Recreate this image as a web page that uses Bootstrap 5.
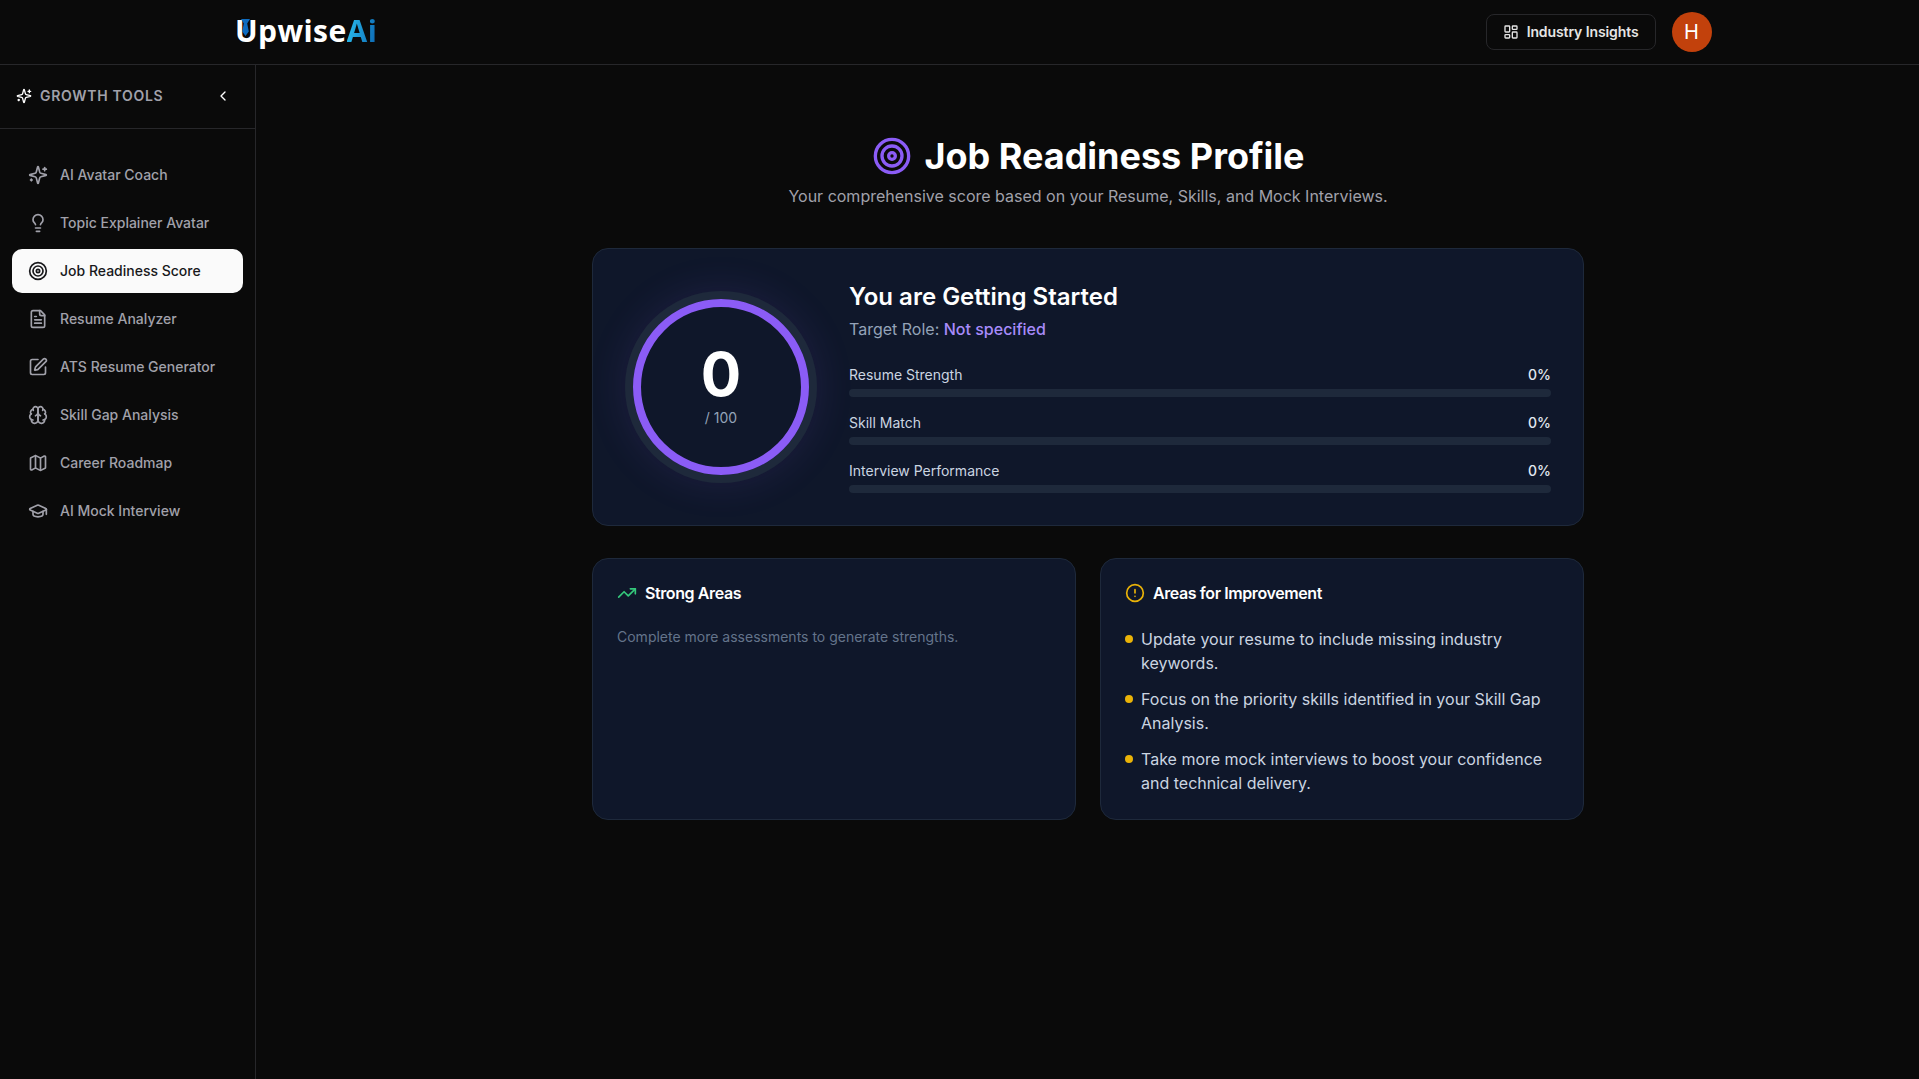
<!DOCTYPE html>
<html lang="en">

<head>
    <meta charset="UTF-8">
    <meta name="viewport" content="width=device-width, initial-scale=1.0">
    <title>Job Readiness Profile</title>
    <link href="https://cdn.jsdelivr.net/npm/bootstrap@5.3.0/dist/css/bootstrap.min.css" rel="stylesheet">
    <style>
        html, body { height: 100%; }
        body { background: #0a0a0a; color: #fafafa; font-family: Inter, "Liberation Sans", sans-serif; overflow: hidden; }
        .ico { width: 20px; height: 20px; flex-shrink: 0; fill: none; stroke: currentColor; stroke-width: 2; stroke-linecap: round; stroke-linejoin: round; }
        .ico-16 { width: 16px; height: 16px; }
        .ico-40 { width: 40px; height: 40px; }

        /* top bar */
        .topbar { height: 65px; border-bottom: 1px solid #27272a; padding: 0; }
        .topbar-inner { width: 1536px; margin: 0 auto; padding: 0 16px; }
        .brand { position: relative; margin: -2px 0 0 27.5px; font-family: "Open Sans", sans-serif; font-size: 30px; font-weight: 700; line-height: 36px; letter-spacing: .4px; color: #fff; padding: 0; }
        .brand-ai { background: linear-gradient(100deg, #2cc3f2, #0a63b0); -webkit-background-clip: text; background-clip: text; color: transparent; }
        .brand-tie { position: absolute; left: 6px; top: 6px; width: 9px; height: 17px; }
        .insights-btn { height: 36px; padding: 0 16px; border: 1px solid #27272a; border-radius: 8px; background: #0a0a0a; color: #e5e5e5; font-size: 14px; line-height: 20px; font-weight: 600; letter-spacing: -.1px; }
        .insights-btn:hover { background: #0a0a0a; color: #e5e5e5; border-color: #27272a; }
        .user-avatar { width: 40px; height: 40px; background: #c2410c; color: #fff; font-size: 20px; }

        /* sidebar */
        .side { width: 256px; flex-shrink: 0; border-right: 1px solid #27272a; }
        .side-head { height: 64px; padding: 0 24px 2px 16px; border-bottom: 1px solid #27272a; }
        .side-title { color: #a1a1aa; font-size: 14px; line-height: 20px; font-weight: 600; letter-spacing: .7px; }
        .side-nav { padding: 24px 12px; gap: 4px; }
        .side-link { height: 44px; padding: 0 16px; gap: 12px; border-radius: 10px; color: #a1a1aa; font-size: 14px; line-height: 20px; font-weight: 500; }
        .side-link.active { background: #fafafa; color: #18181b; }

        /* content */
        .page-body { padding: 71px 0 0 1px; }
        .page-wrap { width: 992px; margin: 0 auto; }
        .page-heading { padding-left: 1px; gap: 12px; }
        .page-title { font-size: 36px; line-height: 40px; font-weight: 700; color: #fff; margin: 0; }
        .page-sub { color: #a1a1aa; font-size: 16px; line-height: 24px; margin: 8px 0 40px; }
        .panel { background: #0f172a; border: 1px solid #1e293b; border-radius: 16px; color: #fafafa; }
        .score-card { margin-bottom: 32px; }
        .score-body { padding: 32px; gap: 32px; }
        .ring { width: 176px; height: 176px; margin: 8px; flex-shrink: 0; border: 8px solid #8b5cf6; border-radius: 50%; box-shadow: 0 0 0 8px #1e293b, 0 0 40px 8px rgba(139, 92, 246, .12); }
        .ring-num { font-size: 60px; line-height: 60px; font-weight: 700; color: #fff; margin-top: -2px; }
        .ring-of { font-size: 14px; line-height: 20px; color: #94a3b8; margin-top: 4px; }
        .score-title { font-size: 24px; line-height: 32px; font-weight: 600; color: #fff; margin: 0 0 4px; }
        .score-role { font-size: 16px; line-height: 24px; color: #94a3b8; margin-bottom: 24px; }
        .score-role b { color: #a78bfa; font-weight: 500; }
        .metric { margin-bottom: 16px; }
        .metric:last-child { margin-bottom: 0; }
        .metric-head { font-size: 14px; line-height: 20px; color: #cbd5e1; margin-bottom: 4px; }
        .metric-pct { color: #e2e8f0; font-weight: 500; }
        .metric .progress { height: 8px; background: #1e293b; border-radius: 8px; }
        .panel-head { font-size: 16px; line-height: 20px; font-weight: 600; letter-spacing: -.4px; color: #fff; margin: 0 0 24px; gap: 8px; }
        .panel-empty { font-size: 14px; line-height: 20px; color: #64748b; margin: 0; }
        .tips { display: flex; flex-direction: column; gap: 12px; margin: 0; }
        .tips li { display: flex; gap: 8px; font-size: 16px; line-height: 24px; color: #cbd5e1; }
        .tip-dot { width: 8px; height: 8px; margin-top: 8px; border-radius: 50%; background: #eab308; flex-shrink: 0; }
    </style>
</head>

<body class="d-flex flex-column">
    <!-- Top bar -->
    <nav class="navbar topbar">
        <div class="topbar-inner d-flex align-items-center justify-content-between">
            <a class="navbar-brand brand" href="#">Upwise<span class="brand-ai">Ai</span>
                <svg class="brand-tie" viewBox="0 0 9 17"><path d="M0 0h9L6.2 4.5l1.6 8L4.5 17 1.2 12.5l1.6-8z" fill="#0f6cc0"/></svg>
            </a>
            <div class="d-flex align-items-center gap-3">
                <button type="button" class="btn insights-btn d-flex align-items-center gap-2">
                    <svg class="ico ico-16" viewBox="0 0 24 24"><rect width="7" height="9" x="3" y="3" rx="1"/><rect width="7" height="5" x="14" y="3" rx="1"/><rect width="7" height="9" x="14" y="12" rx="1"/><rect width="7" height="5" x="3" y="16" rx="1"/></svg>
                    Industry Insights
                </button>
                <div class="user-avatar rounded-circle d-flex align-items-center justify-content-center">H</div>
            </div>
        </div>
    </nav>

    <div class="d-flex flex-grow-1">
        <!-- Sidebar -->
        <aside class="side">
            <div class="side-head d-flex align-items-center justify-content-between">
                <div class="side-title d-flex align-items-center gap-2 text-uppercase">
                    <svg class="ico ico-16 text-white" viewBox="0 0 24 24"><path d="M9.937 15.5A2 2 0 0 0 8.5 14.063l-6.135-1.582a.5.5 0 0 1 0-.962L8.5 9.936A2 2 0 0 0 9.937 8.5l1.582-6.135a.5.5 0 0 1 .963 0L14.063 8.5A2 2 0 0 0 15.5 9.937l6.135 1.581a.5.5 0 0 1 0 .964L15.5 14.063a2 2 0 0 0-1.437 1.437l-1.582 6.135a.5.5 0 0 1-.963 0z"/><path d="M20 3v4"/><path d="M22 5h-4"/><path d="M4 17v2"/><path d="M5 18H3"/></svg>
                    Growth Tools
                </div>
                <svg class="ico ico-16 text-white" viewBox="0 0 24 24"><path d="m15 18-6-6 6-6"/></svg>
            </div>
            <nav class="nav flex-column side-nav">
                <a class="nav-link side-link d-flex align-items-center" href="#">
                    <svg class="ico" viewBox="0 0 24 24"><path d="M9.937 15.5A2 2 0 0 0 8.5 14.063l-6.135-1.582a.5.5 0 0 1 0-.962L8.5 9.936A2 2 0 0 0 9.937 8.5l1.582-6.135a.5.5 0 0 1 .963 0L14.063 8.5A2 2 0 0 0 15.5 9.937l6.135 1.581a.5.5 0 0 1 0 .964L15.5 14.063a2 2 0 0 0-1.437 1.437l-1.582 6.135a.5.5 0 0 1-.963 0z"/><path d="M20 3v4"/><path d="M22 5h-4"/><path d="M4 17v2"/><path d="M5 18H3"/></svg>
                    AI Avatar Coach
                </a>
                <a class="nav-link side-link d-flex align-items-center" href="#">
                    <svg class="ico" viewBox="0 0 24 24"><path d="M15 14c.2-1 .7-1.7 1.5-2.5 1-.9 1.5-2.2 1.5-3.5A6 6 0 0 0 6 8c0 1 .2 2.2 1.5 3.5.7.7 1.3 1.5 1.5 2.5"/><path d="M9 18h6"/><path d="M10 22h4"/></svg>
                    Topic Explainer Avatar
                </a>
                <a class="nav-link side-link active d-flex align-items-center" href="#">
                    <svg class="ico" viewBox="0 0 24 24"><circle cx="12" cy="12" r="10"/><circle cx="12" cy="12" r="6"/><circle cx="12" cy="12" r="2"/></svg>
                    Job Readiness Score
                </a>
                <a class="nav-link side-link d-flex align-items-center" href="#">
                    <svg class="ico" viewBox="0 0 24 24"><path d="M15 2H6a2 2 0 0 0-2 2v16a2 2 0 0 0 2 2h12a2 2 0 0 0 2-2V7Z"/><path d="M14 2v4a2 2 0 0 0 2 2h4"/><path d="M10 9H8"/><path d="M16 13H8"/><path d="M16 17H8"/></svg>
                    Resume Analyzer
                </a>
                <a class="nav-link side-link d-flex align-items-center" href="#">
                    <svg class="ico" viewBox="0 0 24 24"><path d="M12 3H5a2 2 0 0 0-2 2v14a2 2 0 0 0 2 2h14a2 2 0 0 0 2-2v-7"/><path d="M18.375 2.625a1 1 0 0 1 3 3l-9.013 9.014a2 2 0 0 1-.853.505l-2.873.84a.5.5 0 0 1-.62-.62l.84-2.873a2 2 0 0 1 .506-.852z"/></svg>
                    ATS Resume Generator
                </a>
                <a class="nav-link side-link d-flex align-items-center" href="#">
                    <svg class="ico" viewBox="0 0 24 24"><path d="M12 5a3 3 0 1 0-5.997.125 4 4 0 0 0-2.526 5.77 4 4 0 0 0 .556 6.588A4 4 0 1 0 12 18Z"/><path d="M12 5a3 3 0 1 1 5.997.125 4 4 0 0 1 2.526 5.77 4 4 0 0 1-.556 6.588A4 4 0 1 1 12 18Z"/><path d="M15 13a4.5 4.5 0 0 1-3-4 4.5 4.5 0 0 1-3 4"/><path d="M17.599 6.5a3 3 0 0 0 .399-1.375"/><path d="M6.003 5.125A3 3 0 0 0 6.401 6.5"/><path d="M3.477 10.896a4 4 0 0 1 .585-.396"/><path d="M19.938 10.5a4 4 0 0 1 .585.396"/><path d="M6 18a4 4 0 0 1-1.967-.516"/><path d="M19.967 17.484A4 4 0 0 1 18 18"/></svg>
                    Skill Gap Analysis
                </a>
                <a class="nav-link side-link d-flex align-items-center" href="#">
                    <svg class="ico" viewBox="0 0 24 24"><path d="M14.106 5.553a2 2 0 0 0 1.788 0l3.659-1.83A1 1 0 0 1 21 4.619v12.764a1 1 0 0 1-.553.894l-4.553 2.277a2 2 0 0 1-1.788 0l-4.212-2.106a2 2 0 0 0-1.788 0l-3.659 1.83A1 1 0 0 1 3 19.381V6.618a1 1 0 0 1 .553-.894l4.553-2.277a2 2 0 0 1 1.788 0z"/><path d="M15 5.764v15"/><path d="M9 3.236v15"/></svg>
                    Career Roadmap
                </a>
                <a class="nav-link side-link d-flex align-items-center" href="#">
                    <svg class="ico" viewBox="0 0 24 24"><path d="M21.42 10.922a1 1 0 0 0-.019-1.838L12.83 5.18a2 2 0 0 0-1.66 0L2.6 9.08a1 1 0 0 0 0 1.832l8.57 3.908a2 2 0 0 0 1.66 0z"/><path d="M22 10v6"/><path d="M6 12.5V16a6 3 0 0 0 12 0v-3.5"/></svg>
                    AI Mock Interview
                </a>
            </nav>
        </aside>

        <!-- Main content -->
        <main class="flex-grow-1 page-body">
            <div class="page-wrap">
                <div class="page-heading d-flex align-items-center justify-content-center">
                    <svg class="ico ico-40" viewBox="0 0 24 24" style="color:#8b5cf6"><circle cx="12" cy="12" r="10"/><circle cx="12" cy="12" r="6"/><circle cx="12" cy="12" r="2"/></svg>
                    <h1 class="page-title">Job Readiness Profile</h1>
                </div>
                <p class="page-sub text-center">Your comprehensive score based on your Resume, Skills, and Mock Interviews.</p>

                <div class="card panel score-card">
                    <div class="card-body score-body d-flex align-items-center">
                        <div class="ring d-flex flex-column align-items-center justify-content-center">
                            <div class="ring-num">0</div>
                            <div class="ring-of">/ 100</div>
                        </div>
                        <div class="flex-grow-1">
                            <h2 class="score-title">You are Getting Started</h2>
                            <div class="score-role">Target Role: <b>Not specified</b></div>
                            <div class="metric">
                                <div class="metric-head d-flex justify-content-between"><span>Resume Strength</span><span class="metric-pct">0%</span></div>
                                <div class="progress"><div class="progress-bar" style="width:0%"></div></div>
                            </div>
                            <div class="metric">
                                <div class="metric-head d-flex justify-content-between"><span>Skill Match</span><span class="metric-pct">0%</span></div>
                                <div class="progress"><div class="progress-bar" style="width:0%"></div></div>
                            </div>
                            <div class="metric">
                                <div class="metric-head d-flex justify-content-between"><span>Interview Performance</span><span class="metric-pct">0%</span></div>
                                <div class="progress"><div class="progress-bar" style="width:0%"></div></div>
                            </div>
                        </div>
                    </div>
                </div>

                <div class="row g-4">
                    <div class="col-6">
                        <div class="card panel h-100">
                            <div class="card-body p-4">
                                <h3 class="panel-head d-flex align-items-center">
                                    <svg class="ico" viewBox="0 0 24 24" style="color:#34c77b"><path d="M16 7h6v6"/><path d="m22 7-8.5 8.5-5-5L2 17"/></svg>
                                    Strong Areas
                                </h3>
                                <p class="panel-empty">Complete more assessments to generate strengths.</p>
                            </div>
                        </div>
                    </div>
                    <div class="col-6">
                        <div class="card panel h-100">
                            <div class="card-body p-4">
                                <h3 class="panel-head d-flex align-items-center">
                                    <svg class="ico" viewBox="0 0 24 24" style="color:#eab308"><circle cx="12" cy="12" r="10"/><line x1="12" x2="12" y1="8" y2="12"/><line x1="12" x2="12.01" y1="16" y2="16"/></svg>
                                    Areas for Improvement
                                </h3>
                                <ul class="tips list-unstyled">
                                    <li><span class="tip-dot"></span><span>Update your resume to include missing industry keywords.</span></li>
                                    <li><span class="tip-dot"></span><span>Focus on the priority skills identified in your Skill Gap Analysis.</span></li>
                                    <li><span class="tip-dot"></span><span>Take more mock interviews to boost your confidence and technical delivery.</span></li>
                                </ul>
                            </div>
                        </div>
                    </div>
                </div>
            </div>
        </main>
    </div>

    <script src="https://cdn.jsdelivr.net/npm/bootstrap@5.3.0/dist/js/bootstrap.bundle.min.js"></script>
</body>

</html>
